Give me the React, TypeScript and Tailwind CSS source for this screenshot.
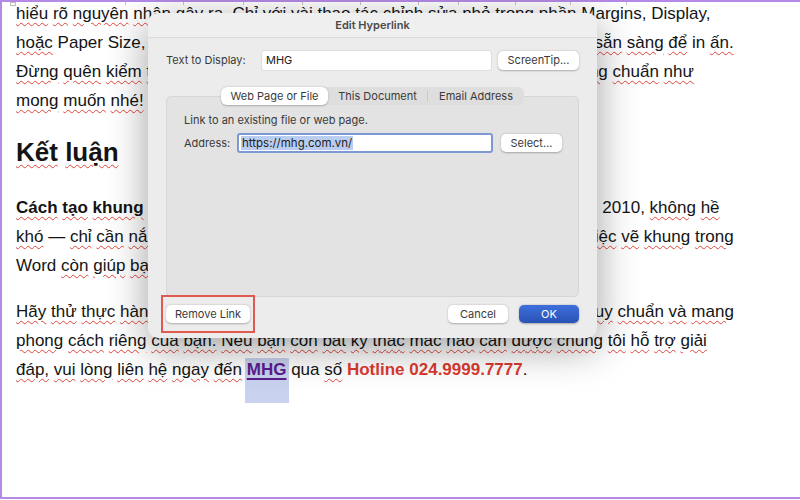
import React from "react";

// words the spell checker accepts (no red wave)
const known = new Set([
  "Paper",
  "Size,",
  "Margins,",
  "Display,",
  "in",
  "Word",
  "Microsoft",
  "qua",
  "2003,",
  "2007,",
  "2010,",
  "—",
  "ra.",
]);

const Words: React.FC<{ text: string }> = ({ text }) => {
  const parts = text.split(" ");
  return (
    <>
      {parts.map((w, i) => (
        <React.Fragment key={i}>
          {w === "" ? null : known.has(w) ? (
            <span>{w}</span>
          ) : (
            <span className="underline decoration-wavy decoration-[#e2453c] decoration-1 underline-offset-[3px]">
              {w}
            </span>
          )}
          {i < parts.length - 1 ? " " : null}
        </React.Fragment>
      ))}
    </>
  );
};

const MacButton: React.FC<{ label: string; className?: string }> = ({
  label,
  className = "",
}) => (
  <div
    className={`flex items-center justify-center rounded-[5px] bg-white text-[11px] text-[#3a3a3a] shadow-[0_0.5px_2px_rgba(0,0,0,0.28)] ${className}`}
  >
    {label}
  </div>
);

const EditHyperlink: React.FC = () => {
  return (
    <div
      className="absolute left-[148px] top-[13px] z-20 flex h-[325px] w-[449px] flex-col overflow-hidden rounded-[10px] bg-[#ececec] shadow-[0_10px_40px_rgba(0,0,0,0.38)]"
      style={{ fontFamily: "Inter, 'Noto Sans', sans-serif" }}
    >
      {/* title bar */}
      <div className="flex h-[25px] items-center justify-center border-b border-[#d9d9d9] bg-[#efefef] text-[11px] font-semibold text-[#4a4a4a]">
        Edit Hyperlink
      </div>

      <div className="flex flex-col px-[18px] pt-[13px]">
        <div className="flex h-[19px] items-center">
          <span className="w-[96px] text-[11px] text-[#3a3a3a]">
            Text to Display:
          </span>
          <div className="flex h-[19px] w-[229px] items-center rounded-[2px] bg-white pl-[4px] text-[11px] text-[#222] shadow-[0_0_0_0.5px_rgba(0,0,0,0.12)]">
            MHG
          </div>
          <MacButton label="ScreenTip..." className="ml-[7px] h-[19px] w-[81px]" />
        </div>

        {/* tabs */}
        <div className="relative z-10 mb-[-9px] mt-[17px] flex justify-center">
          <div className="flex h-[18px] items-center rounded-[6px] bg-[#dedede] text-[11px] text-[#3a3a3a]">
            <div className="flex h-[18px] w-[107px] items-center justify-center rounded-[6px] bg-white shadow-[0_0.5px_2px_rgba(0,0,0,0.25)]">
              Web Page or File
            </div>
            <div className="flex h-[18px] w-[99px] items-center justify-center">
              This Document
            </div>
            <div className="h-[10px] w-px bg-[#c9c9c9]" />
            <div className="flex h-[18px] w-[96px] items-center justify-center">
              Email Address
            </div>
          </div>
        </div>

        {/* tab content box */}
        <div className="flex h-[201px] flex-col rounded-[5px] border border-[#d6d6d6] bg-[#e3e3e3] pl-[17px] pt-[16px]">
          <div className="h-[14px] text-[11px] leading-[14px] text-[#3a3a3a]">
            Link to an existing file or web page.
          </div>
          <div className="mt-[6px] flex h-[20px] items-center">
            <span className="w-[53px] text-[11px] text-[#3a3a3a]">Address:</span>
            <div className="flex h-[20px] w-[256px] items-center rounded-[3px] border-2 border-[#7d98d3] bg-white pl-[2px]">
              <span className="bg-[#b9cdf0] px-px text-[11.5px] leading-[14px] text-[#1c1c1c]">
                https://mhg.com.vn/
              </span>
            </div>
            <MacButton label="Select..." className="ml-[8px] h-[18px] w-[61px]" />
          </div>
        </div>

        {/* bottom buttons */}
        <div className="mt-[8px] flex h-[18px] items-center">
          <MacButton label="Remove Link" className="h-[18px] w-[84px]" />
          <MacButton label="Cancel" className="ml-auto h-[18px] w-[60px]" />
          <div className="ml-[11px] flex h-[18px] w-[60px] items-center justify-center rounded-[5px] bg-gradient-to-b from-[#3d6fdb] to-[#2a52b6] text-[11px] text-white shadow-[0_0.5px_2px_rgba(0,0,0,0.3)]">
            OK
          </div>
        </div>
      </div>

      {/* annotation */}
      <div className="absolute left-[13px] top-[282px] h-[38px] w-[94px] border-2 border-[#e05a50]" />
    </div>
  );
};

const ticks = [125, 183, 243, 302, 360, 418, 458, 515, 570, 626];

export default function App() {
  return (
    <div className="relative h-[500px] w-[800px] overflow-hidden bg-white">
      <div className="relative h-[499px] w-[800px] border-b-2 border-l-2 border-t-2 border-[#b48ae6]">
        {/* guide ticks on the top edge */}
        <div className="absolute left-[8px] top-0 h-[4px] w-[6px] border border-[#bdbdbd]" />
        {ticks.map((x) => (
          <div
            key={x}
            className="absolute top-0 h-[3px] w-px bg-[#c4c4c4]"
            style={{ left: x - 2 }}
          />
        ))}

        {/* selection highlight under MHG */}
        <div className="absolute left-[243px] top-[356px] h-[45px] w-[44px] bg-[#c9d2ee]" />

        <div
          className="relative h-full overflow-hidden pl-[14px] text-[17px] text-[#141414]"
          style={{ fontFamily: "'Liberation Sans', Arial, sans-serif" }}
        >
          <div className="mt-[-3px] whitespace-nowrap leading-[29px]">
            <div>
              <Words text="hiểu rõ nguyên nhân gây ra. Chỉ với vài thao tác chỉnh sửa nhỏ trong phần Margins, Display," />
            </div>
            <div>
              <Words text="hoặc Paper Size, bạn đã có thể khắc phục lỗi và có được tài liệu hoàn chỉnh sẵn sàng để in ấn." />
            </div>
            <div>
              <Words text="Đừng quên kiểm tra lại bản xem trước khi in để chắc chắn khung hiển thị đúng chuẩn như" />
            </div>
            <div>
              <Words text="mong muốn nhé!" />
            </div>
          </div>

          <div className="mt-[19px] text-[26px] font-bold leading-[36px]">
            <Words text="Kết luận" />
          </div>

          <div className="mt-[23px] whitespace-nowrap leading-[29px]">
            <div>
              <span className="font-bold">
                <Words text="Cách tạo khung trong Word" />
              </span>{" "}
              <Words text="trên các phiên bản Microsoft Word 2003, 2007, 2010, không hề" />
            </div>
            <div>
              <Words text="khó — chỉ cần nắm vững vài thao tác cơ bản là bạn có thể làm được ngay. Việc vẽ khung trong" />
            </div>
            <div>
              <Words text="Word còn giúp bạn trình bày tài liệu chuyên nghiệp hơn." />
            </div>
          </div>

          <div className="mt-[17px] whitespace-nowrap leading-[29px]">
            <div>
              <Words text="Hãy thử thực hành ngay hôm nay để tạo ra những tài liệu đẹp mắt và đúng quy chuẩn và mang" />
            </div>
            <div>
              <Words text="phong cách riêng của bạn. Nếu bạn còn bất kỳ thắc mắc nào cần được chúng tôi hỗ trợ giải" />
            </div>
            <div>
              <Words text="đáp, vui lòng liên hệ ngay đến" />{" "}
              <span className="font-bold text-[#5b1d8e] underline decoration-[#5b1d8e] decoration-2 underline-offset-[3px]">
                MHG
              </span>{" "}
              qua <Words text="số" />{" "}
              <span className="font-bold text-[#dc3a2f]">Hotline 024.9999.7777</span>.
            </div>
          </div>
        </div>
      </div>

      <EditHyperlink />
    </div>
  );
}
